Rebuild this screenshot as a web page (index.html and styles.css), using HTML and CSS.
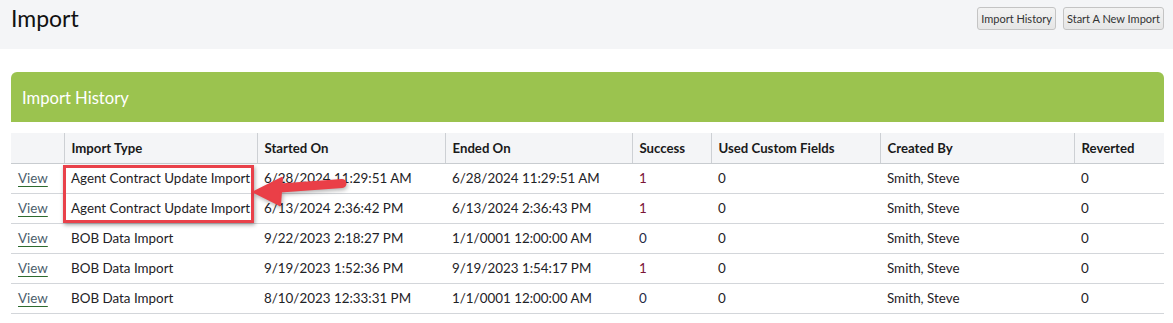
FILE: index.html
```html
<!DOCTYPE html>
<html lang="en">
<head>
<meta charset="utf-8">
<title>Import</title>
<link rel="stylesheet" href="styles.css">
</head>
<body>
<header class="topbar">
  <h1 class="title">Import</h1>
  <div class="actions">
    <button class="btn">Import History</button>
    <button class="btn">Start A New Import</button>
  </div>
</header>
<main class="content">
  <section class="panel">
    <div class="panel-head">Import History</div>
    <div class="table-wrap">
      <table class="grid">
        <colgroup>
          <col class="c-view"><col class="c-type"><col class="c-start"><col class="c-end">
          <col class="c-succ"><col class="c-custom"><col class="c-by"><col class="c-rev">
        </colgroup>
        <thead>
          <tr>
            <th></th><th>Import Type</th><th>Started On</th><th>Ended On</th>
            <th>Success</th><th>Used Custom Fields</th><th>Created By</th><th>Reverted</th>
          </tr>
        </thead>
        <tbody>
          <tr><td><a href="#" class="view">View</a></td><td>Agent Contract Update Import</td><td>6/28/2024 11:29:51 AM</td><td>6/28/2024 11:29:51 AM</td><td class="pos">1</td><td>0</td><td>Smith, Steve</td><td>0</td></tr>
          <tr><td><a href="#" class="view">View</a></td><td>Agent Contract Update Import</td><td>6/13/2024 2:36:42 PM</td><td>6/13/2024 2:36:43 PM</td><td class="pos">1</td><td>0</td><td>Smith, Steve</td><td>0</td></tr>
          <tr><td><a href="#" class="view">View</a></td><td>BOB Data Import</td><td>9/22/2023 2:18:27 PM</td><td>1/1/0001 12:00:00 AM</td><td class="zero">0</td><td>0</td><td>Smith, Steve</td><td>0</td></tr>
          <tr><td><a href="#" class="view">View</a></td><td>BOB Data Import</td><td>9/19/2023 1:52:36 PM</td><td>9/19/2023 1:54:17 PM</td><td class="pos">1</td><td>0</td><td>Smith, Steve</td><td>0</td></tr>
          <tr><td><a href="#" class="view">View</a></td><td>BOB Data Import</td><td>8/10/2023 12:33:31 PM</td><td>1/1/0001 12:00:00 AM</td><td class="zero">0</td><td>0</td><td>Smith, Steve</td><td>0</td></tr>
        </tbody>
      </table>
      <div class="highlight"></div>
      <svg class="arrow" width="100" height="40" viewBox="0 0 100 40" aria-hidden="true">
        <line x1="28" y1="15" x2="90" y2="10.5" stroke="#ea3f47" stroke-width="9" stroke-linecap="round"/>
        <polygon points="2,19 30,5 28,32" fill="#ea3f47" stroke="#ea3f47" stroke-width="2" stroke-linejoin="round"/>
      </svg>
    </div>
  </section>
</main>
</body>
</html>
```

FILE: styles.css
```css
* { box-sizing: border-box; }
html, body { margin: 0; padding: 0; background: #ffffff; }
body {
  font-family: "Lato", "Noto Sans", sans-serif;
  color: #222;
  font-size: 13.4px;
}
.topbar {
  height: 49px;
  background: #f4f5f7;
  display: flex;
  justify-content: space-between;
  align-items: flex-start;
  padding: 0 9px 0 11px;
}
.title {
  margin: 4px 0 0 0;
  font-size: 23px;
  font-weight: 400;
  color: #111;
  line-height: 28px;
}
.actions {
  display: flex;
  gap: 7px;
  margin-top: 7px;
}
.btn {
  font-family: "Lato", "Noto Sans", sans-serif;
  font-size: 11px;
  color: #333;
  height: 23px;
  padding: 0 3px;
  background: linear-gradient(#f3f3f3, #e6e6e6);
  border: 1px solid #c4c4c4;
  border-radius: 3px;
}
.content {
  padding: 23px 9px 0 11px;
}
.panel-head {
  height: 50px;
  background: #9bc34f;
  border-radius: 6px 6px 0 0;
  color: #fff;
  font-size: 16.6px;
  display: flex;
  align-items: center;
  padding: 2px 11px 0;
}
.table-wrap {
  position: relative;
  margin-top: 11px;
}
.grid {
  width: 100%;
  border-collapse: collapse;
  table-layout: fixed;
}
.c-view { width: 53px; }
.c-type { width: 193px; }
.c-start { width: 188px; }
.c-end { width: 187px; }
.c-succ { width: 79px; }
.c-custom { width: 169px; }
.c-by { width: 194px; }
.c-rev { width: 90px; }
.grid th {
  background: #f4f5f7;
  font-weight: 700;
  text-align: left;
  height: 30px;
  padding: 0 7px;
  border-left: 1px solid #cdd0d4;
  border-bottom: 1px solid #c8ccd0;
  font-size: 13.2px;
  color: #1a1a1a;
}
.grid th:first-child { border-left: none; }
.grid td {
  height: 30px;
  padding: 0 7px;
  border-bottom: 1px solid #d3d6da;
  white-space: nowrap;
  color: #1e2226;
}
.grid td.pos { color: #7a1436; }
.grid td.zero { color: #1f2a44; }
.view {
  color: #4b5d6b;
  text-decoration: underline;
  text-decoration-color: #2e6a2e;
  text-underline-offset: 3px;
}
.highlight {
  position: absolute;
  left: 52px;
  top: 32px;
  width: 191px;
  height: 58px;
  border: 3px solid #e9414a;
  box-shadow: 1px 2px 4px rgba(0,0,0,0.35);
  pointer-events: none;
}
.arrow {
  position: absolute;
  left: 241px;
  top: 40px;
  overflow: visible;
  filter: drop-shadow(1px 2px 2px rgba(0,0,0,0.3));
}
```
